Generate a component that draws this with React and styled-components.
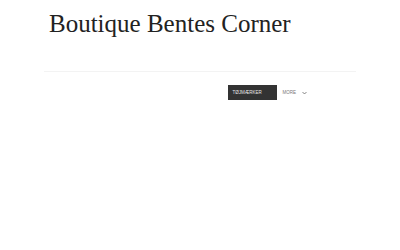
import React from 'react';
import styled, { createGlobalStyle } from 'styled-components';

const GlobalStyle = createGlobalStyle`
  html, body {
    margin: 0;
    padding: 0;
    background: #ffffff;
  }
`;

const Page = styled.div`
  width: 312px;
  margin: 0 auto;
  padding-top: 9px;
`;

const Header = styled.header`
  height: 62px;
  padding-left: 5px;
  border-bottom: 1px solid #f3f3f3;
`;

const Title = styled.h1`
  margin: 0;
  font-family: "Liberation Serif", "Times New Roman", serif;
  font-size: 25px;
  font-weight: normal;
  line-height: 29px;
  color: #222222;
`;

const Nav = styled.nav`
  display: flex;
  justify-content: flex-end;
  align-items: center;
  gap: 6px;
  margin-top: 13px;
  padding-right: 49px;
`;

const NavButton = styled.a`
  display: flex;
  align-items: center;
  box-sizing: border-box;
  width: 49px;
  height: 15px;
  padding-left: 5px;
  background: ${(p) => (p.active ? '#333333' : 'transparent')};
  color: ${(p) => (p.active ? '#e8e8e8' : '#777777')};
  font-family: "Liberation Sans", Arial, sans-serif;
  font-size: 4.5px;
  text-transform: uppercase;
`;

const More = styled.span`
  display: flex;
  align-items: center;
  gap: 6px;
  color: #777777;
  font-family: "Liberation Sans", Arial, sans-serif;
  font-size: 4.5px;
  text-transform: uppercase;
`;

const Chevron = () => (
  <svg width="5" height="4" viewBox="0 0 5 4" fill="none">
    <path d="M0.5 1L2.5 3L4.5 1" stroke="#555" strokeWidth="0.7" />
  </svg>
);

export default function App() {
  return (
    <>
      <GlobalStyle />
      <Page>
        <Header>
          <Title>Boutique Bentes Corner</Title>
        </Header>
        <Nav>
          <NavButton active>Tøjmærker</NavButton>
          <More>
            More
            <Chevron />
          </More>
        </Nav>
      </Page>
    </>
  );
}
